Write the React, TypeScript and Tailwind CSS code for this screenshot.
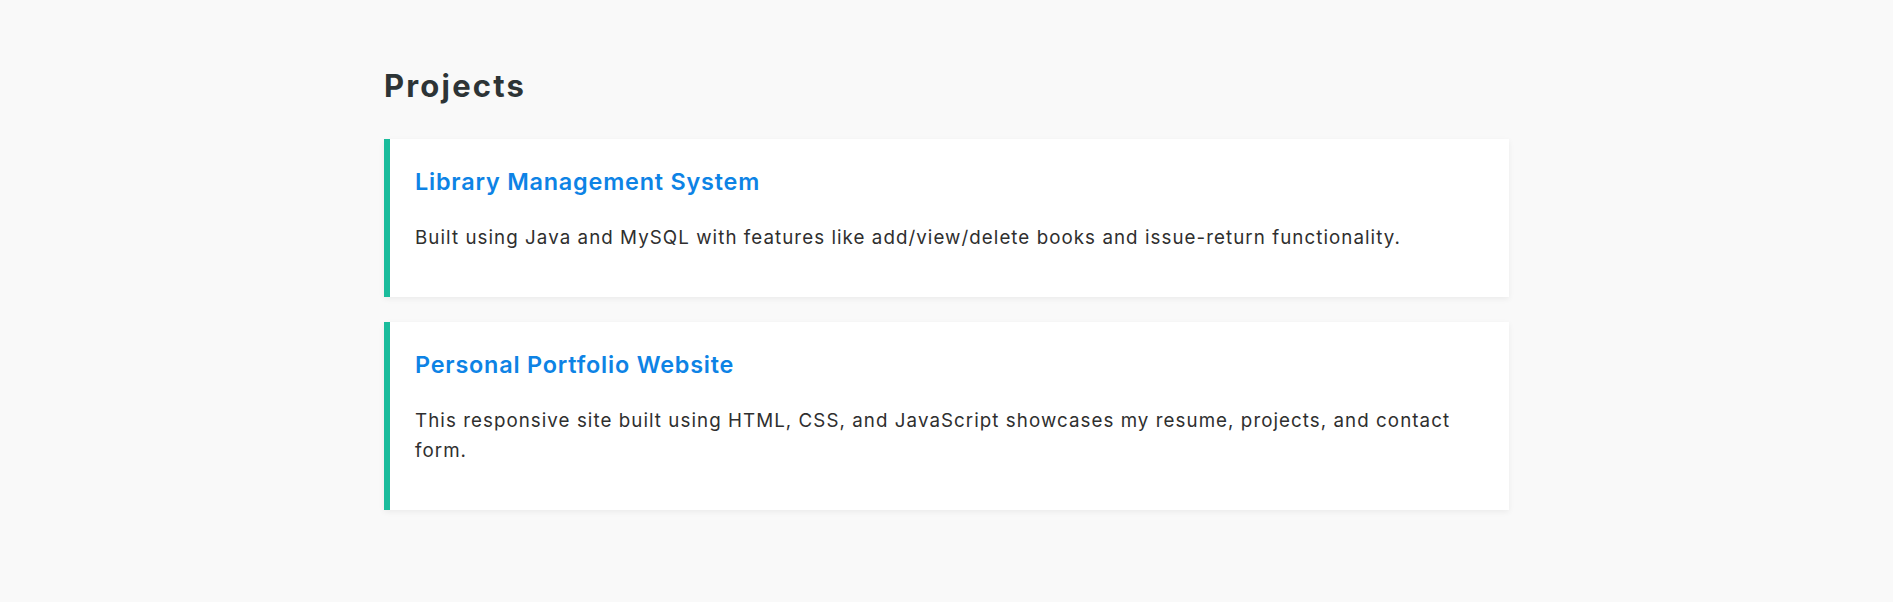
import React from "react";

interface Project {
  title: string;
  description: string;
}

const projects: Project[] = [
  {
    title: "Library Management System",
    description:
      "Built using Java and MySQL with features like add/view/delete books and issue-return functionality.",
  },
  {
    title: "Personal Portfolio Website",
    description:
      "This responsive site built using HTML, CSS, and JavaScript showcases my resume, projects, and contact form.",
  },
];

const ProjectCard = ({ title, description }: Project) => (
  <div className="bg-white border-l-[6px] border-[#1abc9c] px-[25px] pt-[25px] pb-[25px] mb-[25px] shadow-[0_2px_6px_rgba(0,0,0,0.06)]">
    <h3 className="text-[23.4px] leading-[35px] font-semibold tracking-[0.8px] text-[#0d83e5]">
      {title}
    </h3>
    <p className="mt-[24px] mb-[19px] text-[18.75px] leading-[30px] tracking-[1.05px] text-[#2f2f2f]">
      {description}
    </p>
  </div>
);

const App = () => {
  return (
    <div className="min-h-screen bg-[#f9f9f9] font-['Inter',sans-serif]">
      <section className="max-w-[1125px] mx-auto pt-[63px]">
        <h2 className="text-[31px] leading-[45px] font-bold tracking-[2.2px] text-[#2d3436] mb-[31px]">
          Projects
        </h2>

        {/* Project cards */}
        {projects.map((p) => (
          <ProjectCard key={p.title} title={p.title} description={p.description} />
        ))}
      </section>
    </div>
  );
};

export default App;
